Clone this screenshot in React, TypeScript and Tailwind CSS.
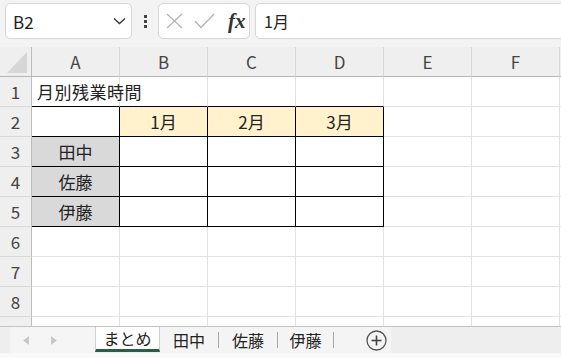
import React from 'react'

const font = { fontFamily: '"Noto Sans CJK JP", "Noto Sans", sans-serif' }

const cols = ['A', 'B', 'C', 'D', 'E', 'F']

type CellDef = { text?: string; cls: string }

function bodyCell(r: number, c: number): CellDef {
  // r: 1..9, c: 0..5
  if (r === 1) {
    if (c === 0) return { text: '月別残業時間', cls: 'border-r border-r-[#e1e1e1] border-b border-b-black justify-start pl-[5px] overflow-visible whitespace-nowrap z-10 tracking-[0.5px]' }
    if (c <= 3) return { cls: 'border-r border-r-[#e1e1e1] border-b border-b-black' }
    return { cls: 'border-r border-b border-[#e1e1e1]' }
  }
  if (r >= 2 && r <= 5 && c <= 3) {
    if (r === 2) {
      if (c === 0) return { cls: 'border-r border-b border-black bg-white' }
      return { text: `${c}月`, cls: 'border-r border-b border-black bg-[#fff2cc] justify-center' }
    }
    if (c === 0) {
      const names = ['田中', '佐藤', '伊藤']
      return { text: names[r - 3], cls: 'border-r border-b border-black bg-[#d9d9d9] justify-center' }
    }
    return { cls: 'border-r border-b border-black' }
  }
  return { cls: 'border-r border-b border-[#e1e1e1]' }
}

function Toolbar() {
  return (
    <div className="h-[47px] bg-[#f3f3f3] flex items-start pt-[3px] pl-[5px] overflow-hidden">
      <div className="w-[127px] h-[36px] bg-white border border-[#d6d6d6] rounded-[5px] flex items-center justify-between pl-[7px] pr-[5px] shrink-0">
        <span className="text-[17px] text-[#222] leading-none">B2</span>
        <svg width="13" height="8" viewBox="0 0 13 8">
          <polyline points="1,1.5 6.5,6.5 12,1.5" fill="none" stroke="#333" strokeWidth="1.3" />
        </svg>
      </div>
      <div className="w-[26px] h-[36px] flex flex-col items-center justify-center gap-[2px] shrink-0">
        <div className="w-[3px] h-[3px] bg-[#444]" />
        <div className="w-[3px] h-[3px] bg-[#444]" />
        <div className="w-[3px] h-[3px] bg-[#444]" />
      </div>
      <div className="w-[92px] h-[36px] bg-white border border-[#d6d6d6] rounded-[5px] flex items-center pl-[7px] shrink-0">
        <svg width="17" height="16" viewBox="0 0 17 16">
          <line x1="1" y1="1" x2="16" y2="15" stroke="#b4b4b4" strokeWidth="1.3" />
          <line x1="16" y1="1" x2="1" y2="15" stroke="#b4b4b4" strokeWidth="1.3" />
        </svg>
        <svg className="ml-[11px]" width="21" height="16" viewBox="0 0 21 16">
          <polyline points="1,8 7,14.5 20,1" fill="none" stroke="#b4b4b4" strokeWidth="1.3" />
        </svg>
        <span
          className="ml-[13px] text-[21px] italic font-bold text-[#333] leading-none"
          style={{ fontFamily: '"Liberation Serif", "DejaVu Serif", serif' }}
        >
          fx
        </span>
      </div>
      <div className="ml-[5px] w-[340px] h-[36px] bg-white border border-[#d6d6d6] rounded-[5px] flex items-center pl-[8px] shrink-0">
        <span className="text-[16px] text-[#222] leading-none">1月</span>
      </div>
    </div>
  )
}

function Sheet() {
  const rows = [1, 2, 3, 4, 5, 6, 7, 8, 9]
  return (
    <div className="h-[279px] overflow-hidden bg-white">
      <div className="grid grid-cols-[32px_repeat(6,88px)_1fr] auto-rows-[30px] text-[17px]">
        <div className="bg-[#efefef] border-r border-r-[#bdbdbd] border-b border-b-[#b5b5b5] relative">
          <svg className="absolute left-[7px] top-[5px]" width="21" height="21" viewBox="0 0 21 21">
            <polygon points="20,0 20,21 0,21" fill="#d6d6d6" />
          </svg>
        </div>
        {cols.map((c) => (
          <div
            key={c}
            className="bg-[#efefef] border-r border-r-[#d8d8d8] border-b border-b-[#b5b5b5] flex items-center justify-center text-[#444]"
          >
            {c}
          </div>
        ))}
        <div className="bg-[#efefef] border-b border-b-[#b5b5b5]" />
        {rows.map((r) => (
          <React.Fragment key={r}>
            <div className="bg-[#efefef] border-r border-r-[#bdbdbd] border-b border-b-[#d8d8d8] flex items-center justify-center text-[#444]">
              {r}
            </div>
            {cols.map((c, i) => {
              const cell = bodyCell(r, i)
              return (
                <div key={c} className={`flex items-center text-[#222] ${cell.cls}`}>
                  {cell.text}
                </div>
              )
            })}
            <div className="border-b border-[#e1e1e1]" />
          </React.Fragment>
        ))}
      </div>
    </div>
  )
}

function TabBar() {
  return (
    <div className="h-[32px] border-t border-[#c4c4c4] bg-[#eeeeee] flex flex-col">
      <div className="h-[26px] flex items-stretch">
        <div className="w-[10px]" />
        <div className="w-[85px] bg-[#f5f5f5] flex items-center pl-[13px] gap-[22px]">
          <svg width="6" height="9" viewBox="0 0 6 9">
            <polygon points="6,0 6,9 0,4.5" fill="#c8c8c8" />
          </svg>
          <svg width="6" height="9" viewBox="0 0 6 9">
            <polygon points="0,0 0,9 6,4.5" fill="#c8c8c8" />
          </svg>
        </div>
        <div className="w-[65px] h-[25px] bg-white border-l border-r border-[#cfcfcf] border-b-[3px] border-b-[#285e46] flex items-center justify-center text-[16px] text-[#222]">
          まとめ
        </div>
        <div className="flex items-stretch bg-[#f4f4f4] text-[16px] text-[#222]">
          <div className="w-[58px] flex items-center justify-center">田中</div>
          <div className="w-px my-[5px] bg-[#a8a8a8]" />
          <div className="w-[58px] flex items-center justify-center">佐藤</div>
          <div className="w-px my-[5px] bg-[#a8a8a8]" />
          <div className="w-[55px] flex items-center justify-center">伊藤</div>
          <div className="w-px my-[5px] bg-[#a8a8a8]" />
          <div className="w-[57px] flex items-center pl-[32px]">
            <svg width="21" height="21" viewBox="0 0 21 21">
              <circle cx="10.5" cy="10.5" r="9.5" fill="none" stroke="#555" strokeWidth="1.3" />
              <line x1="5.5" y1="10.5" x2="15.5" y2="10.5" stroke="#444" strokeWidth="1.6" />
              <line x1="10.5" y1="5.5" x2="10.5" y2="15.5" stroke="#444" strokeWidth="1.6" />
            </svg>
          </div>
        </div>
      </div>
      <div className="flex-1 bg-[#f9f9f9]" />
    </div>
  )
}

export default function App() {
  return (
    <div className="w-[561px] h-[358px] overflow-hidden bg-white flex flex-col" style={font}>
      <Toolbar />
      <Sheet />
      <TabBar />
    </div>
  )
}
